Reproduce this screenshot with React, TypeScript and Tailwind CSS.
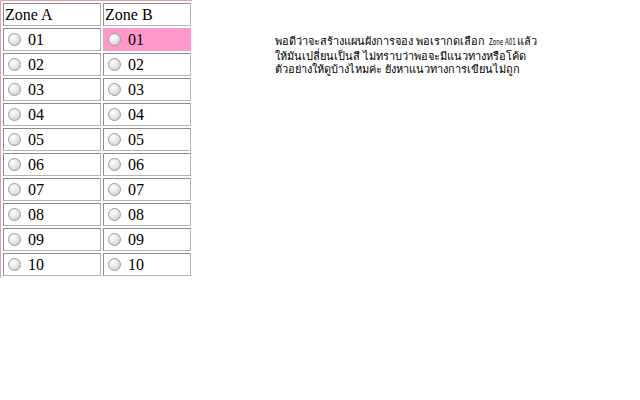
import React from "react";

const rows = ["01", "02", "03", "04", "05", "06", "07", "08", "09", "10"];

function Radio() {
  return (
    <span className="inline-block w-[13px] h-[13px] rounded-full border border-[#9a9a9a] bg-[radial-gradient(circle_at_35%_30%,#ffffff_0%,#e8e8e8_45%,#c4c4c4_100%)] ml-[4px] mr-[7px] shrink-0" />
  );
}

function Cell({ label, active }: { label: string; active?: boolean }) {
  return (
    <div
      className={
        "h-[23px] flex items-center border " +
        (active
          ? "bg-[#ff99cc] border-[#ff99cc]"
          : "border-t-[#8c8c8c] border-l-[#8c8c8c] border-b-[#b4b4b4] border-r-[#b4b4b4]")
      }
    >
      <Radio />
      <span className="text-[16px] leading-none text-black">{label}</span>
    </div>
  );
}

export default function App() {
  return (
    <div className="w-[640px] h-[400px] bg-white flex items-start font-['Times_New_Roman','Liberation_Serif',serif]">
      <div className="w-[192px] border-t border-l border-[#e8a0a8] p-[2px] grid grid-cols-[98px_88px] gap-[2px]">
        <div className="h-[23px] flex items-center px-[1px] border border-t-[#8c8c8c] border-l-[#8c8c8c] border-b-[#b4b4b4] border-r-[#b4b4b4] text-[16px] text-black">
          Zone A
        </div>
        <div className="h-[23px] flex items-center px-[1px] border border-t-[#8c8c8c] border-l-[#8c8c8c] border-b-[#b4b4b4] border-r-[#b4b4b4] text-[16px] text-black">
          Zone B
        </div>
        {rows.map((r) => (
          <React.Fragment key={r}>
            <Cell label={r} />
            <Cell label={r} active={r === "01"} />
          </React.Fragment>
        ))}
      </div>
      <div className="ml-[83px] mt-[35px] text-[11px] leading-[13.5px] text-black font-['Tahoma','DejaVu_Sans',sans-serif]">
        พอดีว่าจะสร้างแผนผังการจอง พอเรากดเลือก{" "}
        <span className="inline-block w-[24px] whitespace-nowrap">
          <span className="inline-block origin-left scale-x-[0.62] text-[9px]">Zone A01</span>
        </span>{" "}
        แล้ว
        <br />
        ให้มันเปลี่ยนเป็นสี ไม่ทราบว่าพอจะมีแนวทางหรือโค้ด
        <br />
        ตัวอย่างให้ดูบ้างไหมค่ะ ยังหาแนวทางการเขียนไม่ถูก
      </div>
    </div>
  );
}
